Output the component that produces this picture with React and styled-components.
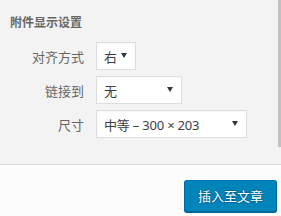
import React from "react";
import styled, { createGlobalStyle } from "styled-components";

const GlobalStyle = createGlobalStyle`
  html, body {
    margin: 0;
    padding: 0;
    background: #fcfcfc;
  }
  body {
    font-family: "Noto Sans", "Noto Sans CJK SC", sans-serif;
    -webkit-font-smoothing: antialiased;
  }
`;

const Frame = styled.div`
  width: 281px;
  height: 216px;
  display: flex;
  flex-direction: column;
  overflow: hidden;
`;

const Sidebar = styled.div`
  height: 164px;
  display: flex;
  background: #f3f3f3;
  border-bottom: 1px solid #dddddd;
`;

const Settings = styled.div`
  flex: 1;
  padding: 15px 0 0 10px;
`;

const Scrollbar = styled.div`
  width: 3px;
  display: flex;
  flex-direction: column;
`;

const Thumb = styled.div`
  height: 147px;
  background: #c1c1c1;
`;

const Title = styled.h2`
  margin: 0 0 13px;
  font-size: 12px;
  line-height: 14px;
  font-weight: 700;
  color: #666666;
  font-family: "Noto Sans CJK SC", sans-serif;
`;

const Grid = styled.div`
  display: grid;
  grid-template-columns: 74px auto;
  column-gap: 12px;
  row-gap: 6px;
  align-items: center;
`;

const Label = styled.span`
  text-align: right;
  font-size: 13px;
  color: #666666;
  font-family: "Noto Sans CJK SC", sans-serif;
`;

const SelectBox = styled.div`
  box-sizing: border-box;
  width: ${(p) => p.$w}px;
  height: 28px;
  display: flex;
  align-items: center;
  justify-content: space-between;
  padding: 0 8px 0 7px;
  background: #ffffff;
  border: 1px solid #dddddd;
  box-shadow: inset 0 1px 2px rgba(0, 0, 0, 0.04);
  font-size: 13px;
  color: #3c4146;
`;

const Value = styled.span`
  white-space: nowrap;
  letter-spacing: -0.2px;
`;

const Caret = styled.svg`
  width: 6px;
  height: 5px;
  margin-top: -1px;
  flex: none;
`;

const Toolbar = styled.div`
  flex: 1;
  display: flex;
  justify-content: flex-end;
  align-items: flex-start;
  padding: 15px 4px 0 0;
  background: #fcfcfc;
`;

const Button = styled.button`
  box-sizing: border-box;
  height: 32px;
  padding: 0 13px 2px;
  border: 1px solid;
  border-color: #0073aa #006799 #006799;
  border-radius: 3px;
  background: #0085ba;
  box-shadow: 0 1px 0 #006799;
  color: #ffffff;
  font-size: 13px;
  font-family: "Noto Sans CJK SC", sans-serif;
  text-shadow: 0 -1px 1px #006799, 1px 0 1px #006799, 0 1px 1px #006799, -1px 0 1px #006799;
`;

const Select = ({ width, children }) => (
  <SelectBox $w={width}>
    <Value>{children}</Value>
    <Caret viewBox="0 0 6 5">
      <path d="M0 0h6L3 5z" fill="#32373c" />
    </Caret>
  </SelectBox>
);

const rows = [
  { label: "对齐方式", value: "右", width: 40 },
  { label: "链接到", value: "无", width: 86 },
  { label: "尺寸", value: "中等 – 300 × 203", width: 151 },
];

export default function App() {
  return (
    <>
      <GlobalStyle />
      <Frame>
        <Sidebar>
          <Settings>
            <Title>附件显示设置</Title>
            <Grid>
              {rows.map((r) => (
                <React.Fragment key={r.label}>
                  <Label>{r.label}</Label>
                  <Select width={r.width}>{r.value}</Select>
                </React.Fragment>
              ))}
            </Grid>
          </Settings>
          <Scrollbar>
            <Thumb />
          </Scrollbar>
        </Sidebar>
        <Toolbar>
          <Button>插入至文章</Button>
        </Toolbar>
      </Frame>
    </>
  );
}
